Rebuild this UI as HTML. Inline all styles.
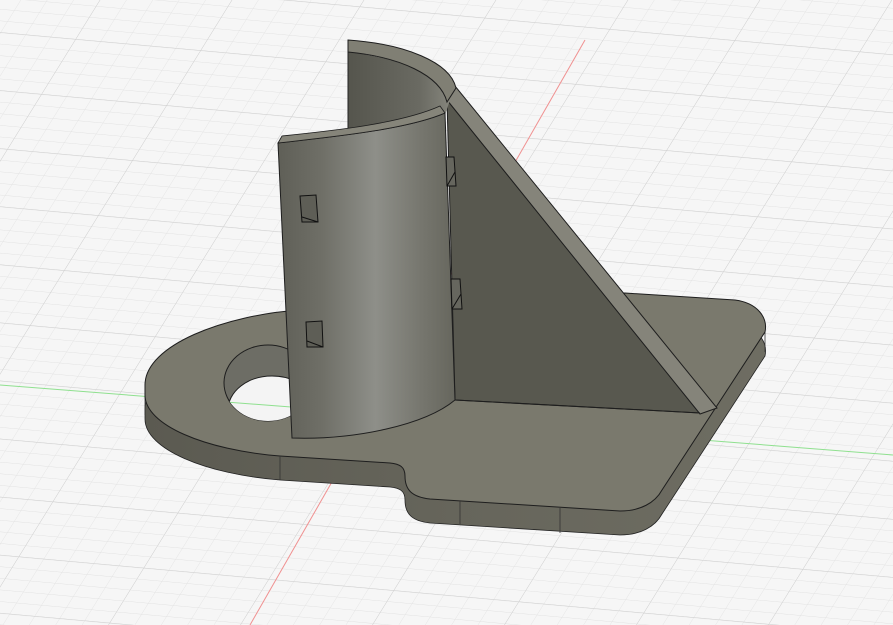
<!DOCTYPE html>
<html><head><meta charset="utf-8"><style>
html,body{margin:0;padding:0;background:#f5f5f5;overflow:hidden;width:893px;height:625px}
svg{display:block}
</style></head><body>
<svg width="893" height="625" viewBox="0 0 893 625" xmlns="http://www.w3.org/2000/svg">
<defs>
<clipPath id="frame"><rect width="893" height="625"/></clipPath>
<pattern id="minor" patternUnits="userSpaceOnUse" width="25" height="11">
<path d="M0 0H25M0 0V11" stroke="#e1e1e1" stroke-width="0.8" fill="none"/>
</pattern>
<pattern id="major" patternUnits="userSpaceOnUse" width="125" height="55">
<path d="M0 0H125M0 0V55" stroke="#cfcfcf" stroke-width="1" fill="none"/>
</pattern>
<linearGradient id="cyl" x1="278" y1="0" x2="455" y2="0" gradientUnits="userSpaceOnUse">
<stop offset="0" stop-color="#5f5f57"/>
<stop offset="0.25" stop-color="#6f6f67"/>
<stop offset="0.55" stop-color="#8e8f89"/>
<stop offset="0.8" stop-color="#77776f"/>
<stop offset="1" stop-color="#66665d"/>
</linearGradient>
<linearGradient id="inner" x1="348" y1="0" x2="450" y2="0" gradientUnits="userSpaceOnUse">
<stop offset="0" stop-color="#55554d"/>
<stop offset="0.7" stop-color="#6a6a62"/>
<stop offset="1" stop-color="#85857c"/>
</linearGradient>
<linearGradient id="side" x1="0" y1="0" x2="1" y2="0">
<stop offset="0" stop-color="#5b5a51"/>
<stop offset="0.5" stop-color="#66655b"/>
<stop offset="1" stop-color="#6e6d62"/>
</linearGradient>
<clipPath id="holeclip"><ellipse cx="268" cy="383" rx="44" ry="38"/></clipPath>
</defs>
<g clip-path="url(#frame)">
<rect width="893" height="625" fill="#f6f6f6"/>
<g transform="matrix(1 0.09 -0.62 1 371 414)">
<rect x="-1200" y="-700" width="2400" height="1000" fill="url(#minor)"/>
<rect x="-1200" y="-700" width="2400" height="1000" fill="url(#major)"/>
</g>
<line x1="0" y1="385" x2="893" y2="455" stroke="#8fe08f" stroke-width="1"/>
<line x1="250" y1="625" x2="585" y2="40" stroke="#f09090" stroke-width="1"/>

<path transform="translate(0,24)" d="M145,385 C145,345 225,315 300,310 L625,293 L735,300 C758,303 768,318 765,332 L662,490 C655,503 640,511 620,511 L430,499 C412,497 405,490 405,476 C405,467 400,464 390,463 L280,456 C205,450 145,425 145,395 Z" fill="url(#side)" stroke="#222" stroke-width="0.8"/>
<path d="M145,390 L145,415 M765,332 L765,352" stroke="#333" stroke-width="0.8"/>
<path d="M145,385 C145,345 225,315 300,310 L625,293 L735,300 C758,303 768,318 765,332 L662,490 C655,503 640,511 620,511 L430,499 C412,497 405,490 405,476 C405,467 400,464 390,463 L280,456 C205,450 145,425 145,395 Z" fill="#7a796d" stroke="#1e1e1e" stroke-width="1"/>
<line x1="280" y1="456" x2="280" y2="480" stroke="#333" stroke-width="0.8"/>
<line x1="460" y1="501" x2="460" y2="524" stroke="#333" stroke-width="0.8"/>
<line x1="560" y1="508" x2="560" y2="533" stroke="#333" stroke-width="0.8"/>
<ellipse cx="268" cy="383" rx="44" ry="38" fill="#6d6d65" stroke="#1e1e1e" stroke-width="1"/>
<g clip-path="url(#holeclip)">
<ellipse cx="272" cy="410" rx="44" ry="34" fill="#f4f4f4" stroke="#1e1e1e" stroke-width="1"/>
<line x1="200" y1="400" x2="330" y2="410" stroke="#8fe08f" stroke-width="1"/>
</g>

<path d="M447,100 L455,400 L700,413 Z" fill="#58584f" stroke="#1e1e1e" stroke-width="1"/>
<path d="M447,100 L455,86 L717,408 L700,414 Z" fill="#85847a" stroke="#1e1e1e" stroke-width="1"/>
<line x1="455" y1="400" x2="700" y2="413" stroke="#1e1e1e" stroke-width="1"/>

<path d="M348,52 C400,58 440,75 450,100 L445,115 C400,132 330,138 348,150 Z" fill="url(#inner)"/>
<path d="M348,52 L348,150" stroke="#222" stroke-width="1"/>
<path d="M348,40 C405,44 450,62 456,88 L447,102 C440,75 400,57 348,52 Z" fill="#807f74" stroke="#1e1e1e" stroke-width="1"/>
<path d="M278,143 C330,137 405,130 445,113 L455,400 C425,425 355,440 292,438 Z" fill="url(#cyl)" stroke="#1e1e1e" stroke-width="1"/>
<path d="M278,143 L282,136 C330,131 400,124 440,106 L445,113 C405,130 330,137 278,143 Z" fill="#86857a" stroke="#1e1e1e" stroke-width="0.8"/>
<path d="M300,196 L316,195 L318,222 L302,222 Z" fill="#5e5e56" stroke="#111" stroke-width="1"/>
<path d="M302,217 L318,222" stroke="#111" stroke-width="1"/>
<path d="M306,322 L322,321 L323,347 L307,347 Z" fill="#5e5e56" stroke="#111" stroke-width="1"/>
<path d="M307,341 L323,347" stroke="#111" stroke-width="1"/>
<path d="M446,157 L454,157 L456,186 L447,186 Z" fill="#66665e" stroke="#111" stroke-width="1"/>
<path d="M447,186 L455,172" stroke="#111" stroke-width="1"/>
<path d="M451,279 L460,279 L462,309 L452,309 Z" fill="#66665e" stroke="#111" stroke-width="1"/>
<path d="M452,309 L461,294" stroke="#111" stroke-width="1"/>
</g>
</svg>
</body></html>
